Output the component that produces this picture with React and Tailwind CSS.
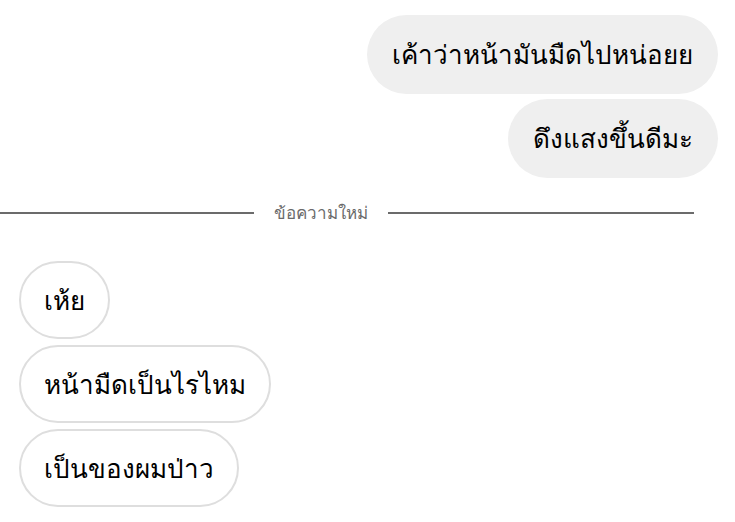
import React from 'react';

const mine = ['เค้าว่าหน้ามันมืดไปหน่อยย', 'ดึงแสงขึ้นดีมะ'];
const theirs = ['เห้ย', 'หน้ามืดเป็นไรไหม', 'เป็นของผมป่าว'];

export default function App() {
  return (
    <div className="w-[735px] h-[522px] bg-white overflow-hidden font-['Noto_Sans','Liberation_Sans',sans-serif] text-black">
      {/* Sent messages */}
      <div className="flex flex-col items-end gap-[5px] pt-[15px] pr-[17px]">
        {mine.map((m) => (
          <div key={m} className="h-[79px] flex items-center px-[25px] rounded-full bg-[#efefef] text-[26px] font-medium">
            {m}
          </div>
        ))}
      </div>

      {/* New messages divider */}
      <div className="flex items-center mt-[22px] pr-[41px] h-[26px]">
        <div className="flex-1 h-[2px] bg-[#6b6b6b]" />
        <span className="px-[20px] text-[17px] text-[#6b6b6b]">ข้อความใหม่</span>
        <div className="w-[306px] h-[2px] bg-[#6b6b6b]" />
      </div>

      {/* Received messages */}
      <div className="flex flex-col items-start gap-[6px] mt-[35px] pl-[19px]">
        {theirs.map((m) => (
          <div key={m} className="h-[78px] flex items-center px-[23px] rounded-full border-2 border-[#dedede] bg-white text-[26px] font-medium">
            {m}
          </div>
        ))}
      </div>
    </div>
  );
}
